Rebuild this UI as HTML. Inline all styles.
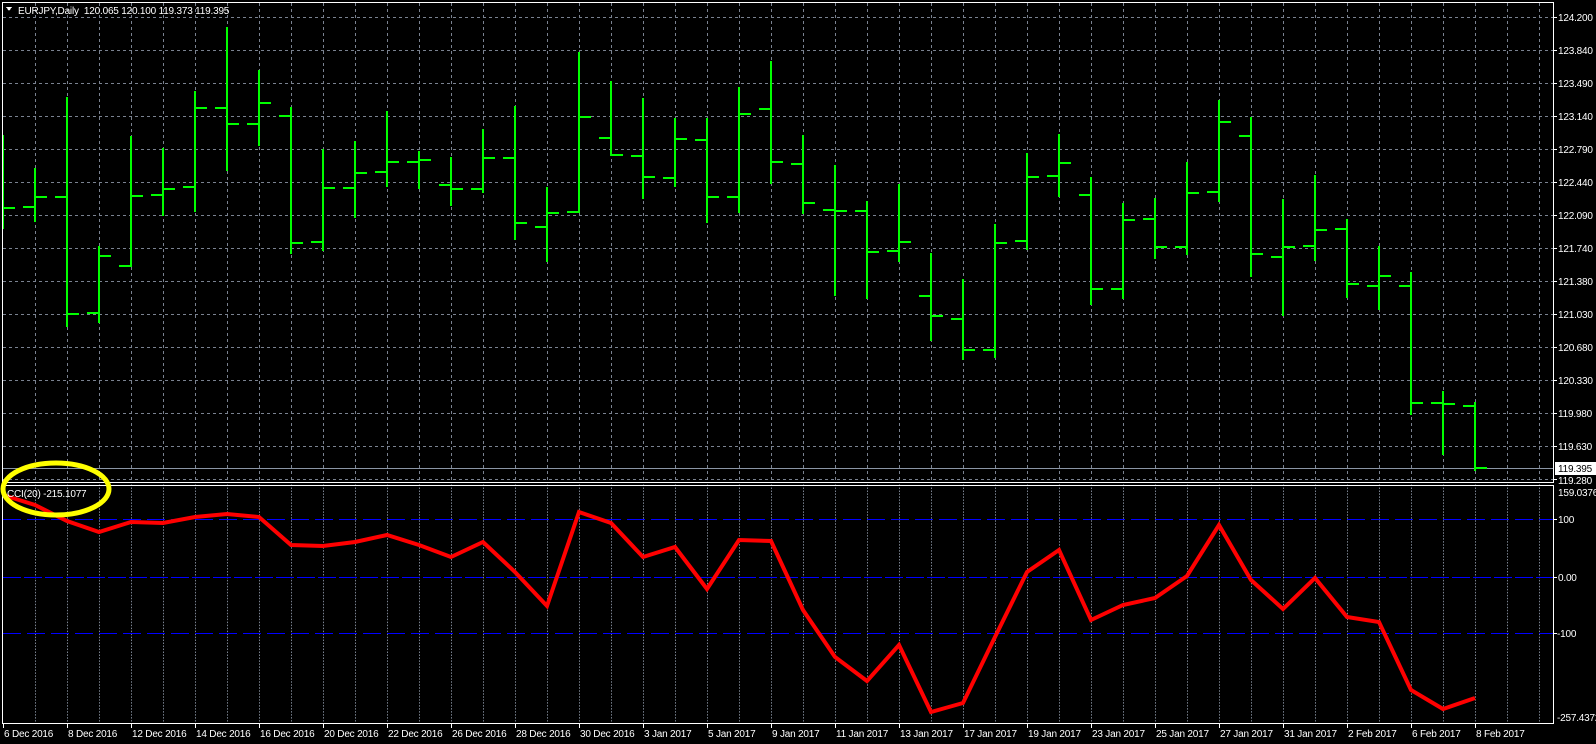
<!DOCTYPE html>
<html><head><meta charset="utf-8"><style>
html,body{margin:0;padding:0;background:#000;width:1596px;height:744px;overflow:hidden}
svg{display:block}
text{font-family:"Liberation Sans",sans-serif;font-size:10px;fill:#fff;letter-spacing:-0.2px;white-space:pre}
</style></head><body>
<svg width="1596" height="744" viewBox="0 0 1596 744" xmlns="http://www.w3.org/2000/svg" shape-rendering="crispEdges">
<rect width="1596" height="744" fill="#000"/>
<g stroke="#7a8290" stroke-width="1" stroke-dasharray="3,3" fill="none">
<path d="M3 17.5H1553M3 50.5H1553M3 83.5H1553M3 116.5H1553M3 149.5H1553M3 182.5H1553M3 215.5H1553M3 248.5H1553M3 281.5H1553M3 314.5H1553M3 347.5H1553M3 380.5H1553M3 413.5H1553M3 446.5H1553M3 479.5H1553"/>
<path id="vl" d="M35.5 3V482M67.5 3V482M99.5 3V482M131.5 3V482M163.5 3V482M195.5 3V482M227.5 3V482M259.5 3V482M291.5 3V482M323.5 3V482M355.5 3V482M387.5 3V482M419.5 3V482M451.5 3V482M483.5 3V482M515.5 3V482M547.5 3V482M579.5 3V482M611.5 3V482M643.5 3V482M675.5 3V482M707.5 3V482M739.5 3V482M771.5 3V482M803.5 3V482M835.5 3V482M867.5 3V482M899.5 3V482M931.5 3V482M963.5 3V482M995.5 3V482M1027.5 3V482M1059.5 3V482M1091.5 3V482M1123.5 3V482M1155.5 3V482M1187.5 3V482M1219.5 3V482M1251.5 3V482M1283.5 3V482M1315.5 3V482M1347.5 3V482M1379.5 3V482M1411.5 3V482M1443.5 3V482M1475.5 3V482M1507.5 3V482M1539.5 3V482"/>
<use href="#vl" transform="translate(0,483) scale(1,0.497)"/>
</g>
<path d="M3 468.5H1553" stroke="#8a95a5" stroke-width="1"/>
<path fill="none" stroke="#00ff00" stroke-width="2" d="M3 135V229M3 208H15M35 168V222M23 207H35M35 197H47M67 97V327M55 197H67M67 314H79M99 246V323M87 313H99M99 256H111M131 136V267M119 266H131M131 196H143M163 148V216M151 195H163M163 189H175M195 91V212M183 187H195M195 108H207M227 27V171M215 108H227M227 124H239M259 70V146M247 124H259M259 103H271M291 107V254M279 116H291M291 243H303M323 149V251M311 242H323M323 188H335M355 141V218M343 188H355M355 173H367M387 111V187M375 172H387M387 162H399M419 151V189M407 162H419M419 160H431M451 157V206M439 185H451M451 189H463M483 129V193M471 189H483M483 158H495M515 106V240M503 158H515M515 223H527M547 187V262M535 227H547M547 213H559M579 52V213M567 212H579M579 117H591M611 81V156M599 138H611M611 155H623M643 98V199M631 156H643M643 177H655M675 118V187M663 178H675M675 139H687M707 118V223M695 140H707M707 197H719M739 87V213M727 197H739M739 114H751M771 61V184M759 109H771M771 162H783M803 135V214M791 164H803M803 203H815M835 165V296M823 210H835M835 211H847M867 201V299M855 211H867M867 252H879M899 184V262M887 251H899M899 242H911M931 253V341M919 296H931M931 316H943M963 279V360M951 319H963M963 350H975M995 224V358M983 350H995M995 243H1007M1027 153V250M1015 241H1027M1027 177H1039M1059 134V197M1047 176H1059M1059 163H1071M1091 177V305M1079 195H1091M1091 289H1103M1123 203V299M1111 289H1123M1123 220H1135M1155 198V259M1143 219H1155M1155 247H1167M1187 162V255M1175 247H1187M1187 193H1199M1219 100V202M1207 192H1219M1219 122H1231M1251 117V277M1239 136H1251M1251 254H1263M1283 199V316M1271 257H1283M1283 247H1295M1315 175V261M1303 246H1315M1315 230H1327M1347 219V298M1335 229H1347M1347 284H1359M1379 246V310M1367 286H1379M1379 276H1391M1411 272V415M1399 286H1411M1411 403H1423M1443 391V455M1431 403H1443M1443 404H1455M1475 402V471M1463 406H1475M1475 468H1487"/>
<g fill="none" stroke="#fff" stroke-width="1">
<rect x="2.5" y="2.5" width="1551" height="480"/>
<rect x="2.5" y="485.5" width="1551" height="238"/>
</g>
<path stroke="#fff" d="M1553 17.5h4M1553 50.5h4M1553 83.5h4M1553 116.5h4M1553 149.5h4M1553 182.5h4M1553 215.5h4M1553 248.5h4M1553 281.5h4M1553 314.5h4M1553 347.5h4M1553 380.5h4M1553 413.5h4M1553 446.5h4M1553 479.5h4M1553 519.5h4M1553 577.5h4M1553 633.5h4"/>
<g stroke="#0000ff" stroke-width="1" stroke-dasharray="18,6" fill="none">
<path d="M3 519.5H1553M3 633.5H1553"/>
<path d="M3 577.5H1553" stroke-dasharray="18,3"/>
</g>
<polyline fill="none" stroke="#ff0000" stroke-width="4" stroke-linejoin="miter" shape-rendering="auto" points="3,495 35,505 67,521 99,532 131,522 163,523 195,517 227,514 259,517 291,545 323,546 355,542 387,535 419,545 451,557 483,542 515,572 547,606 579,512 611,523 643,557 675,547 707,589 739,540 771,541 803,610 835,657 867,681 899,645 931,712 963,703 995,637 1027,572 1059,550 1091,620 1123,605 1155,598 1187,576 1219,525 1251,580 1283,609 1315,578 1347,617 1379,622 1411,690 1443,709 1475,698"/>
<ellipse cx="56" cy="489" rx="53" ry="26" fill="none" stroke="#ffff00" stroke-width="5" shape-rendering="auto"/>
<path d="M6 7H12L9 11Z" fill="#fff"/>
<text x="18" y="14">EURJPY,Daily  120.065 120.100 119.373 119.395</text>
<text x="7" y="497">CCI(20) -215.1077</text>
<g>
<text x="1558" y="21">124.200</text>
<text x="1558" y="54">123.840</text>
<text x="1558" y="87">123.490</text>
<text x="1558" y="120">123.140</text>
<text x="1558" y="153">122.790</text>
<text x="1558" y="186">122.440</text>
<text x="1558" y="219">122.090</text>
<text x="1558" y="252">121.740</text>
<text x="1558" y="285">121.380</text>
<text x="1558" y="318">121.030</text>
<text x="1558" y="351">120.680</text>
<text x="1558" y="384">120.330</text>
<text x="1558" y="417">119.980</text>
<text x="1558" y="450">119.630</text>
<text x="1558" y="484">119.280</text>
<rect x="1555" y="462" width="41" height="13" fill="#fff"/>
<text x="1558" y="472" style="fill:#000">119.395</text>
<text x="1558" y="496">159.0376</text>
<text x="1558" y="523">100</text>
<text x="1558" y="581">0.00</text>
<text x="1557" y="637">-100</text>
<text x="1557" y="721">-257.4372</text>
</g>
<path stroke="#fff" d="M3.5 723v5M67.5 723v5M131.5 723v5M195.5 723v5M259.5 723v5M323.5 723v5M387.5 723v5M451.5 723v5M515.5 723v5M579.5 723v5M643.5 723v5M707.5 723v5M771.5 723v5M835.5 723v5M899.5 723v5M963.5 723v5M1027.5 723v5M1091.5 723v5M1155.5 723v5M1219.5 723v5M1283.5 723v5M1347.5 723v5M1411.5 723v5M1475.5 723v5"/>
<g>
<text x="4" y="737">6 Dec 2016</text>
<text x="68" y="737">8 Dec 2016</text>
<text x="132" y="737">12 Dec 2016</text>
<text x="196" y="737">14 Dec 2016</text>
<text x="260" y="737">16 Dec 2016</text>
<text x="324" y="737">20 Dec 2016</text>
<text x="388" y="737">22 Dec 2016</text>
<text x="452" y="737">26 Dec 2016</text>
<text x="516" y="737">28 Dec 2016</text>
<text x="580" y="737">30 Dec 2016</text>
<text x="644" y="737">3 Jan 2017</text>
<text x="708" y="737">5 Jan 2017</text>
<text x="772" y="737">9 Jan 2017</text>
<text x="836" y="737">11 Jan 2017</text>
<text x="900" y="737">13 Jan 2017</text>
<text x="964" y="737">17 Jan 2017</text>
<text x="1028" y="737">19 Jan 2017</text>
<text x="1092" y="737">23 Jan 2017</text>
<text x="1156" y="737">25 Jan 2017</text>
<text x="1220" y="737">27 Jan 2017</text>
<text x="1284" y="737">31 Jan 2017</text>
<text x="1348" y="737">2 Feb 2017</text>
<text x="1412" y="737">6 Feb 2017</text>
<text x="1476" y="737">8 Feb 2017</text>
</g>
</svg>
</body></html>
